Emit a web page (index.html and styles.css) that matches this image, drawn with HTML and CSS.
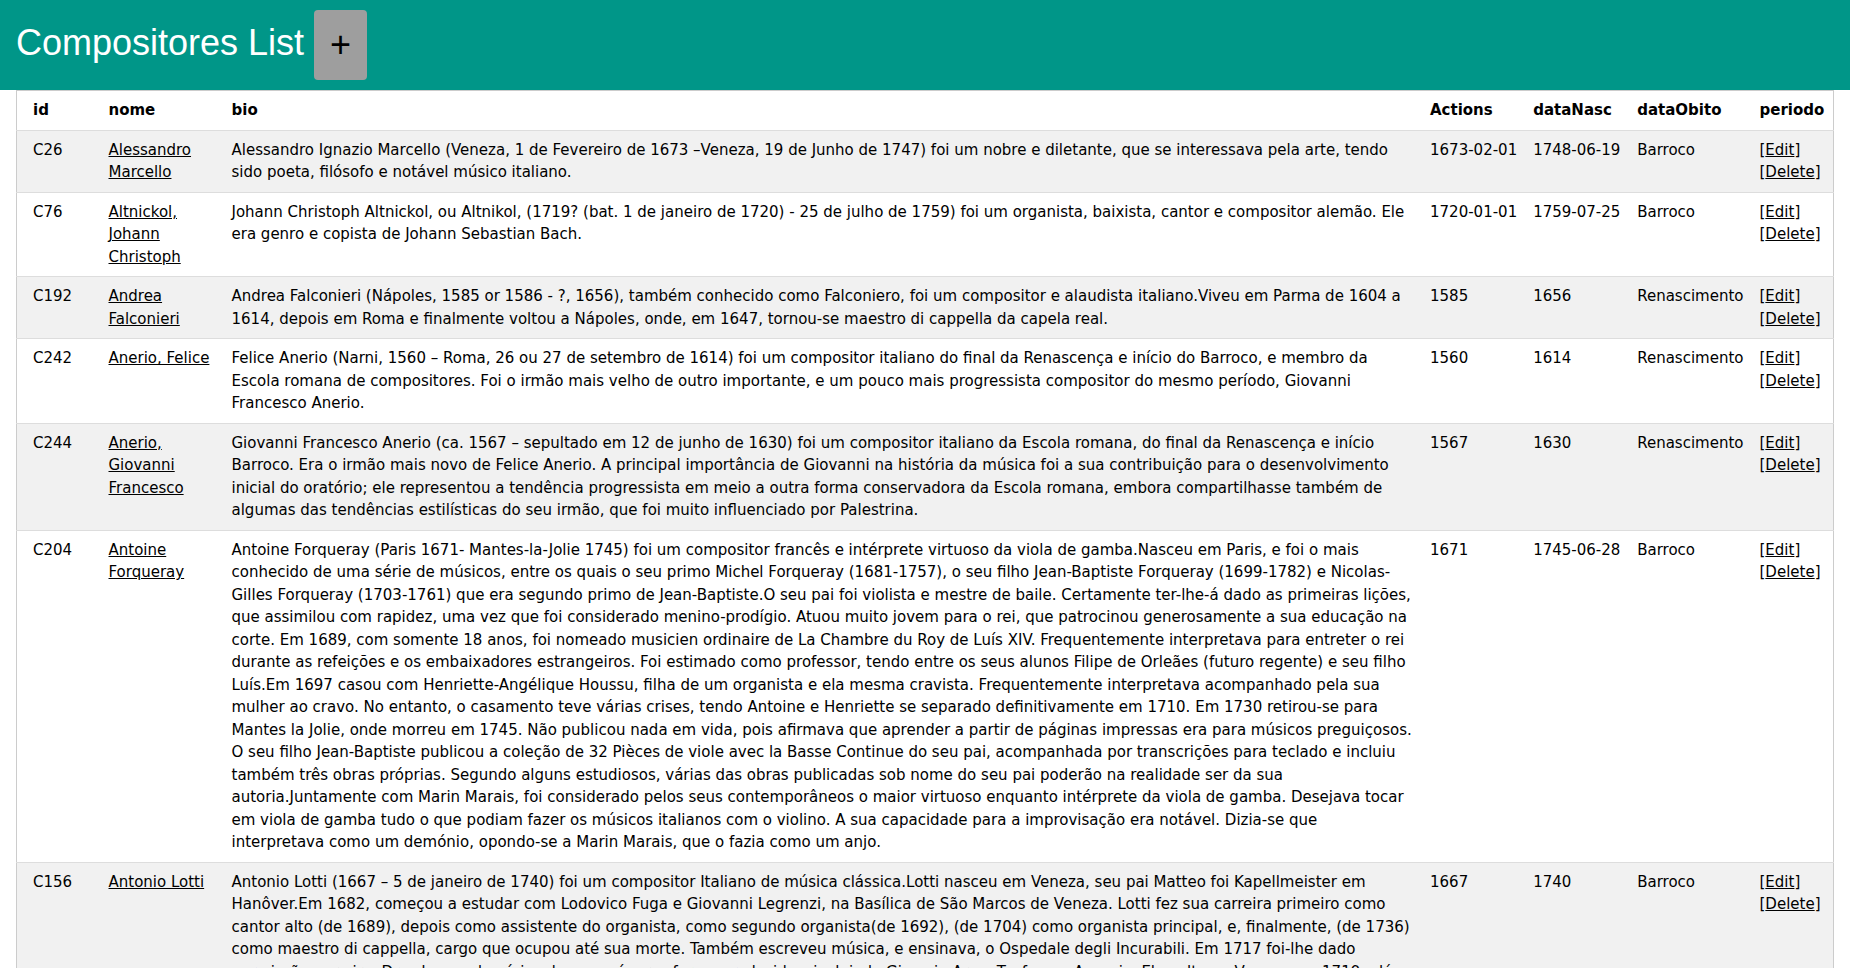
FILE: index.html
```html
<!DOCTYPE html>
<html lang="pt">
<head>
<meta charset="utf-8">
<title>Compositores List</title>
<link rel="stylesheet" href="styles.css">
</head>
<body>
<header class="topbar">
  <h1 class="title">Compositores List <button class="add-btn" type="button">+</button></h1>
</header>
<main class="container">
  <table class="table-all">
    <tr class="head-row">
      <th class="c-id">id</th>
      <th class="c-nome">nome</th>
      <th class="c-bio">bio</th>
      <th class="c-a">Actions</th>
      <th class="c-b">dataNasc</th>
      <th class="c-c">dataObito</th>
      <th class="c-d">periodo</th>
    </tr>
    <tr>
      <td>C26</td>
      <td><a href="#">Alessandro Marcello</a></td>
      <td>Alessandro Ignazio Marcello (Veneza, 1 de Fevereiro de 1673 –Veneza, 19 de Junho de 1747) foi um nobre e diletante, que se interessava pela arte, tendo sido poeta, filósofo e notável músico italiano.</td>
      <td class="date">1673-02-01</td>
      <td class="date">1748-06-19</td>
      <td>Barroco</td>
      <td>[<a href="#">Edit</a>] [<a href="#">Delete</a>]</td>
    </tr>
    <tr>
      <td>C76</td>
      <td><a href="#">Altnickol, Johann Christoph</a></td>
      <td>Johann Christoph Altnickol, ou Altnikol, (1719? (bat. 1 de janeiro de 1720) - 25 de julho de 1759) foi um organista, baixista, cantor e compositor alemão. Ele era genro e copista de Johann Sebastian Bach.</td>
      <td class="date">1720-01-01</td>
      <td class="date">1759-07-25</td>
      <td>Barroco</td>
      <td>[<a href="#">Edit</a>] [<a href="#">Delete</a>]</td>
    </tr>
    <tr>
      <td>C192</td>
      <td><a href="#">Andrea Falconieri</a></td>
      <td>Andrea Falconieri (Nápoles, 1585 or 1586 - ?, 1656), também conhecido como Falconiero, foi um compositor e alaudista italiano.Viveu em Parma de 1604 a 1614, depois em Roma e finalmente voltou a Nápoles, onde, em 1647, tornou-se maestro di cappella da capela real.</td>
      <td class="date">1585</td>
      <td class="date">1656</td>
      <td>Renascimento</td>
      <td>[<a href="#">Edit</a>] [<a href="#">Delete</a>]</td>
    </tr>
    <tr>
      <td>C242</td>
      <td><a href="#">Anerio, Felice</a></td>
      <td>Felice Anerio (Narni, 1560 – Roma, 26 ou 27 de setembro de 1614) foi um compositor italiano do final da Renascença e início do Barroco, e membro da Escola romana de compositores. Foi o irmão mais velho de outro importante, e um pouco mais progressista compositor do mesmo período, Giovanni Francesco Anerio.</td>
      <td class="date">1560</td>
      <td class="date">1614</td>
      <td>Renascimento</td>
      <td>[<a href="#">Edit</a>] [<a href="#">Delete</a>]</td>
    </tr>
    <tr>
      <td>C244</td>
      <td><a href="#">Anerio, Giovanni Francesco</a></td>
      <td>Giovanni Francesco Anerio (ca. 1567 – sepultado em 12 de junho de 1630) foi um compositor italiano da Escola romana, do final da Renascença e início Barroco. Era o irmão mais novo de Felice Anerio. A principal importância de Giovanni na história da música foi a sua contribuição para o desenvolvimento inicial do oratório; ele representou a tendência progressista em meio a outra forma conservadora da Escola romana, embora compartilhasse também de algumas das tendências estilísticas do seu irmão, que foi muito influenciado por Palestrina.</td>
      <td class="date">1567</td>
      <td class="date">1630</td>
      <td>Renascimento</td>
      <td>[<a href="#">Edit</a>] [<a href="#">Delete</a>]</td>
    </tr>
    <tr>
      <td>C204</td>
      <td><a href="#">Antoine Forqueray</a></td>
      <td>Antoine Forqueray (Paris 1671- Mantes-la-Jolie 1745) foi um compositor francês e intérprete virtuoso da viola de gamba.Nasceu em Paris, e foi o mais conhecido de uma série de músicos, entre os quais o seu primo Michel Forqueray (1681-1757), o seu filho Jean-Baptiste Forqueray (1699-1782) e Nicolas-Gilles Forqueray (1703-1761) que era segundo primo de Jean-Baptiste.O seu pai foi violista e mestre de baile. Certamente ter-lhe-á dado as primeiras lições, que assimilou com rapidez, uma vez que foi considerado menino-prodígio. Atuou muito jovem para o rei, que patrocinou generosamente a sua educação na corte. Em 1689, com somente 18 anos, foi nomeado musicien ordinaire de La Chambre du Roy de Luís XIV. Frequentemente interpretava para entreter o rei durante as refeições e os embaixadores estrangeiros. Foi estimado como professor, tendo entre os seus alunos Filipe de Orleães (futuro regente) e seu filho Luís.Em 1697 casou com Henriette-Angélique Houssu, filha de um organista e ela mesma cravista. Frequentemente interpretava acompanhado pela sua mulher ao cravo. No entanto, o casamento teve várias crises, tendo Antoine e Henriette se separado definitivamente em 1710. Em 1730 retirou-se para Mantes la Jolie, onde morreu em 1745. Não publicou nada em vida, pois afirmava que aprender a partir de páginas impressas era para músicos preguiçosos. O seu filho Jean-Baptiste publicou a coleção de 32 Pièces de viole avec la Basse Continue do seu pai, acompanhada por transcrições para teclado e incluiu também três obras próprias. Segundo alguns estudiosos, várias das obras publicadas sob nome do seu pai poderão na realidade ser da sua autoria.Juntamente com Marin Marais, foi considerado pelos seus contemporâneos o maior virtuoso enquanto intérprete da viola de gamba. Desejava tocar em viola de gamba tudo o que podiam fazer os músicos italianos com o violino. A sua capacidade para a improvisação era notável. Dizia-se que interpretava como um demónio, opondo-se a Marin Marais, que o fazia como um anjo.</td>
      <td class="date">1671</td>
      <td class="date">1745-06-28</td>
      <td>Barroco</td>
      <td>[<a href="#">Edit</a>] [<a href="#">Delete</a>]</td>
    </tr>
    <tr>
      <td>C156</td>
      <td><a href="#">Antonio Lotti</a></td>
      <td>Antonio Lotti (1667 – 5 de janeiro de 1740) foi um compositor Italiano de música clássica.Lotti nasceu em Veneza, seu pai Matteo foi Kapellmeister em Hanôver.Em 1682, começou a estudar com Lodovico Fuga e Giovanni Legrenzi, na Basílica de São Marcos de Veneza. Lotti fez sua carreira primeiro como cantor alto (de 1689), depois como assistente do organista, como segundo organista(de 1692), (de 1704) como organista principal, e, finalmente, (de 1736) como maestro di cappella, cargo que ocupou até sua morte. Também escreveu música, e ensinava, o Ospedale degli Incurabili. Em 1717 foi-lhe dado permissão para ir a Dresden, onde várias das suas óperas foram produzidas, incluindo Giove in Argo, Teofane e Ascanio. Ele voltou a Veneza em 1719 e lá permaneceu até a sua morte.</td>
      <td class="date">1667</td>
      <td class="date">1740</td>
      <td>Barroco</td>
      <td>[<a href="#">Edit</a>] [<a href="#">Delete</a>]</td>
    </tr>
  </table>
</main>
</body>
</html>
```
FILE: styles.css
```css
html {
  box-sizing: border-box;
}
*, *::before, *::after {
  box-sizing: inherit;
}
body {
  margin: 0;
  font-family: "DejaVu Sans", Verdana, sans-serif;
  font-size: 15px;
  line-height: 1.5;
  color: #000;
  background: #fff;
}
a {
  color: inherit;
}
.topbar {
  background-color: #009688;
  color: #fff;
  padding: 0.01em 16px;
}
.title {
  font-family: "Liberation Sans", Arial, sans-serif;
  font-size: 36px;
  font-weight: 400;
  margin: 10px 0;
  line-height: 1.5;
}
.add-btn {
  font: inherit;
  margin: 0;
  border: none;
  display: inline-block;
  padding: 8px 16px;
  vertical-align: middle;
  overflow: hidden;
  color: #000;
  background-color: #9e9e9e;
  border-radius: 4px;
  text-align: center;
  white-space: nowrap;
  cursor: pointer;
}
.container {
  padding: 0.01em 16px;
}
.table-all {
  border-collapse: collapse;
  border-spacing: 0;
  width: 100%;
  border: 1px solid #ccc;
}
.table-all tr {
  border-bottom: 1px solid #ddd;
}
.table-all tr:nth-child(odd) {
  background-color: #fff;
}
.table-all tr:nth-child(even) {
  background-color: #f1f1f1;
}
.table-all th,
.table-all td {
  padding: 8px 8px;
  text-align: left;
  vertical-align: top;
}
.table-all th:first-child,
.table-all td:first-child {
  padding-left: 16px;
}
.table-all th {
  font-weight: bold;
}
.table-all td.date {
  white-space: nowrap;
}
.c-id { width: 84px; }
.c-nome { width: 123px; }
.c-a { width: 103px; }
.c-b { width: 104px; }
.c-c { width: 122px; }
.c-d { width: 82px; }
```
